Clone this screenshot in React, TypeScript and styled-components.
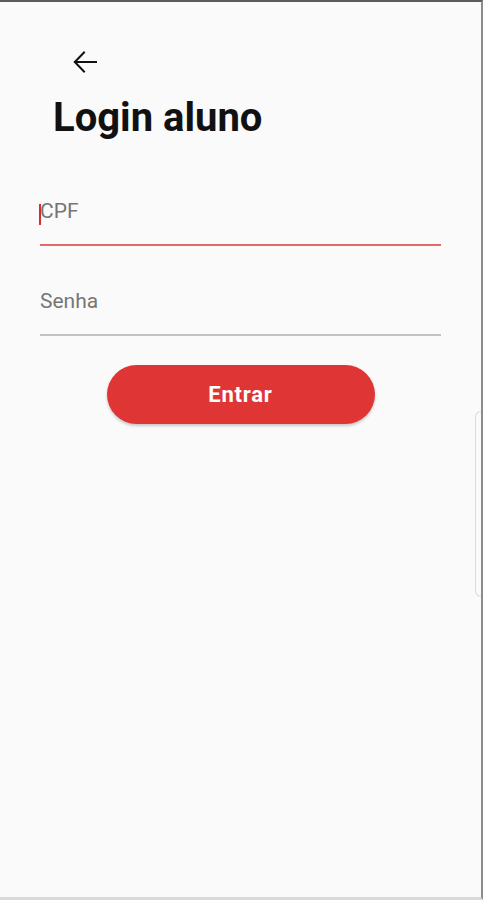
import React from "react";
import styled, { createGlobalStyle } from "styled-components";

const Global = createGlobalStyle`
  html, body { margin: 0; padding: 0; background: #fafafa; }
  body { font-family: Roboto, "Noto Sans", sans-serif; }
  * { box-sizing: border-box; }
`;

const Frame = styled.div`
  position: relative;
  width: 483px;
  height: 900px;
  background: #fafafa;
  border-top: 2px solid #5c5c5c;
  border-right: 2px solid #8c8c8c;
  border-bottom: 3px solid #d9d9d9;
  display: flex;
  flex-direction: column;
  overflow: hidden;
`;

const BackButton = styled.button`
  align-self: flex-start;
  margin: 48px 0 0 73px;
  width: 24px;
  height: 24px;
  padding: 0;
  border: none;
  background: transparent;
  display: flex;
  align-items: center;
  justify-content: center;
  color: #111;
`;

const Title = styled.h1`
  margin: 22px 0 0 53px;
  font-family: Roboto, sans-serif;
  font-weight: 700;
  font-size: 40px;
  line-height: 44px;
  color: #111;
  letter-spacing: 0;
`;

const Form = styled.div`
  display: flex;
  flex-direction: column;
  margin: 42px 40px 0 40px;
`;

const Field = styled.div<{ $focused?: boolean }>`
  position: relative;
  height: 64px;
  border-bottom: 2px solid ${(p) => (p.$focused ? "#e06a6a" : "#c2c2c2")};
  display: flex;
  align-items: center;
  & + & {
    margin-top: 26px;
  }
`;

const Placeholder = styled.span`
  font-family: Roboto, sans-serif;
  font-size: 21px;
  color: #767676;
  margin-top: -4px;
`;

const Cursor = styled.span`
  position: absolute;
  left: -1px;
  top: 22px;
  width: 2px;
  height: 21px;
  background: #d32f2f;
`;

const ButtonRow = styled.div`
  display: flex;
  justify-content: center;
  margin-top: 29px;
`;

const Submit = styled.button`
  width: 268px;
  height: 59px;
  border: none;
  border-radius: 30px;
  background: #df3535;
  color: #fff;
  font-family: Roboto, sans-serif;
  font-weight: 700;
  font-size: 22px;
  letter-spacing: 0.8px;
  box-shadow: 0 2px 3px rgba(0, 0, 0, 0.2);
`;

const EdgeHandle = styled.div`
  position: absolute;
  right: 0;
  top: 409px;
  width: 6px;
  height: 186px;
  border: 1.5px solid #dcdcdc;
  border-right: none;
  border-radius: 6px 0 0 6px;
`;

export default function App() {
  return (
    <>
      <Global />
      <Frame>
        <BackButton aria-label="Voltar">
          <svg width="24" height="24" viewBox="0 0 24 24" fill="none" stroke="#111" strokeWidth="2" strokeLinecap="square">
            <path d="M23 12H2" />
            <path d="M11 2.5L1.8 12L11 21.5" />
          </svg>
        </BackButton>
        <Title>Login aluno</Title>
        <Form>
          <Field $focused>
            <Cursor />
            <Placeholder>CPF</Placeholder>
          </Field>
          <Field>
            <Placeholder>Senha</Placeholder>
          </Field>
        </Form>
        <ButtonRow>
          <Submit>Entrar</Submit>
        </ButtonRow>
        <EdgeHandle />
      </Frame>
    </>
  );
}
